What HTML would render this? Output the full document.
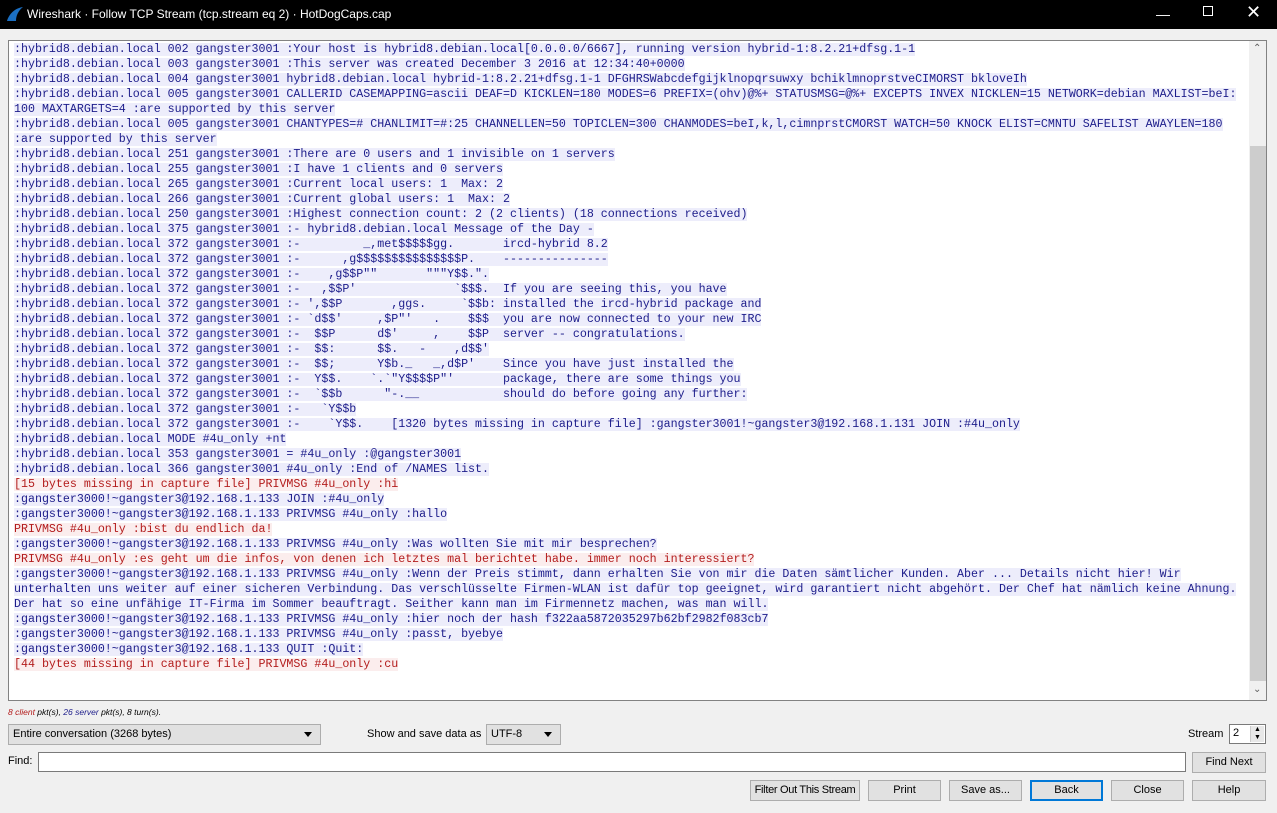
<!DOCTYPE html>
<html><head><meta charset="utf-8"><style>
*{margin:0;padding:0;box-sizing:border-box}
body{width:1277px;height:813px;background:#f0f0f0;position:relative;overflow:hidden;font-family:"Liberation Sans",sans-serif;font-size:11px;color:#000}
#title{position:absolute;left:0;top:0;width:1277px;height:29px;background:#000;color:#fff;font-size:12px}
#title .t{position:absolute;left:27px;top:7px}
#ta{position:absolute;left:8px;top:40px;width:1259px;height:661px;background:#fff;border:1px solid #828282;overflow:hidden}
#txt{position:absolute;left:5px;top:1px;font-family:"Liberation Mono",monospace;font-size:11.65px;line-height:15px}
#txt div{height:15px;white-space:pre}
.s span{background:#ededfb;color:#1c1c8a}
.c span{background:#fbeded;color:#b31c1c}
#sb{position:absolute;right:0;top:0;width:17px;height:659px;background:#f0f0f0}
#thumb{position:absolute;left:1px;top:105px;width:16px;height:535px;background:#cdcdcd}
.abs{position:absolute;white-space:nowrap}
.combo{position:absolute;height:21px;background:#e1e1e1;border:1px solid #adadad;padding:3px 4px;font-size:11px;white-space:nowrap}
.combo:after{content:"";position:absolute;right:8px;top:7px;border:4px solid transparent;border-top:5px solid #000;border-bottom:0}
.btn{position:absolute;top:780px;height:21px;background:#e1e1e1;border:1px solid #adadad;text-align:center;line-height:19px;font-size:11px;white-space:nowrap;overflow:hidden}
</style></head><body>
<div id="title"><svg class="abs" style="left:6px;top:6px" width="18" height="16" viewBox="0 0 18 16"><path d="M1 15 C3 8 9 2 17 1 C12 5 10 10 10 15 Z" fill="#1b6fc2"/></svg><span class="t">Wireshark · Follow TCP Stream (tcp.stream eq 2) · HotDogCaps.cap</span>
<span class="abs" style="left:1156px;top:6px;font-size:14px">&#8212;</span>
<span class="abs" style="left:1203px;top:6px;width:10px;height:10px;border:1px solid #fff"></span>
<span class="abs" style="left:1246px;top:2px;font-size:18px">&#10005;</span>
</div>
<div id="ta"><div id="txt"><div class="s"><span>:hybrid8.debian.local 002 gangster3001 :Your host is hybrid8.debian.local[0.0.0.0/6667], running version hybrid-1:8.2.21+dfsg.1-1</span></div><div class="s"><span>:hybrid8.debian.local 003 gangster3001 :This server was created December 3 2016 at 12:34:40+0000</span></div><div class="s"><span>:hybrid8.debian.local 004 gangster3001 hybrid8.debian.local hybrid-1:8.2.21+dfsg.1-1 DFGHRSWabcdefgijklnopqrsuwxy bchiklmnoprstveCIMORST bkloveIh</span></div><div class="s"><span>:hybrid8.debian.local 005 gangster3001 CALLERID CASEMAPPING=ascii DEAF=D KICKLEN=180 MODES=6 PREFIX=(ohv)@%+ STATUSMSG=@%+ EXCEPTS INVEX NICKLEN=15 NETWORK=debian MAXLIST=beI:</span></div><div class="s"><span>100 MAXTARGETS=4 :are supported by this server</span></div><div class="s"><span>:hybrid8.debian.local 005 gangster3001 CHANTYPES=# CHANLIMIT=#:25 CHANNELLEN=50 TOPICLEN=300 CHANMODES=beI,k,l,cimnprstCMORST WATCH=50 KNOCK ELIST=CMNTU SAFELIST AWAYLEN=180</span></div><div class="s"><span>:are supported by this server</span></div><div class="s"><span>:hybrid8.debian.local 251 gangster3001 :There are 0 users and 1 invisible on 1 servers</span></div><div class="s"><span>:hybrid8.debian.local 255 gangster3001 :I have 1 clients and 0 servers</span></div><div class="s"><span>:hybrid8.debian.local 265 gangster3001 :Current local users: 1  Max: 2</span></div><div class="s"><span>:hybrid8.debian.local 266 gangster3001 :Current global users: 1  Max: 2</span></div><div class="s"><span>:hybrid8.debian.local 250 gangster3001 :Highest connection count: 2 (2 clients) (18 connections received)</span></div><div class="s"><span>:hybrid8.debian.local 375 gangster3001 :- hybrid8.debian.local Message of the Day -</span></div><div class="s"><span>:hybrid8.debian.local 372 gangster3001 :-         _,met$$$$$gg.       ircd-hybrid 8.2</span></div><div class="s"><span>:hybrid8.debian.local 372 gangster3001 :-      ,g$$$$$$$$$$$$$$$P.    ---------------</span></div><div class="s"><span>:hybrid8.debian.local 372 gangster3001 :-    ,g$$P""       """Y$$.".</span></div><div class="s"><span>:hybrid8.debian.local 372 gangster3001 :-   ,$$P'              `$$$.  If you are seeing this, you have</span></div><div class="s"><span>:hybrid8.debian.local 372 gangster3001 :- ',$$P       ,ggs.     `$$b: installed the ircd-hybrid package and</span></div><div class="s"><span>:hybrid8.debian.local 372 gangster3001 :- `d$$'     ,$P"'   .    $$$  you are now connected to your new IRC</span></div><div class="s"><span>:hybrid8.debian.local 372 gangster3001 :-  $$P      d$'     ,    $$P  server -- congratulations.</span></div><div class="s"><span>:hybrid8.debian.local 372 gangster3001 :-  $$:      $$.   -    ,d$$'</span></div><div class="s"><span>:hybrid8.debian.local 372 gangster3001 :-  $$;      Y$b._   _,d$P'    Since you have just installed the</span></div><div class="s"><span>:hybrid8.debian.local 372 gangster3001 :-  Y$$.    `.`"Y$$$$P"'       package, there are some things you</span></div><div class="s"><span>:hybrid8.debian.local 372 gangster3001 :-  `$$b      "-.__            should do before going any further:</span></div><div class="s"><span>:hybrid8.debian.local 372 gangster3001 :-   `Y$$b</span></div><div class="s"><span>:hybrid8.debian.local 372 gangster3001 :-    `Y$$.    [1320 bytes missing in capture file] :gangster3001!~gangster3@192.168.1.131 JOIN :#4u_only</span></div><div class="s"><span>:hybrid8.debian.local MODE #4u_only +nt</span></div><div class="s"><span>:hybrid8.debian.local 353 gangster3001 = #4u_only :@gangster3001</span></div><div class="s"><span>:hybrid8.debian.local 366 gangster3001 #4u_only :End of /NAMES list.</span></div><div class="c"><span>[15 bytes missing in capture file] PRIVMSG #4u_only :hi</span></div><div class="s"><span>:gangster3000!~gangster3@192.168.1.133 JOIN :#4u_only</span></div><div class="s"><span>:gangster3000!~gangster3@192.168.1.133 PRIVMSG #4u_only :hallo</span></div><div class="c"><span>PRIVMSG #4u_only :bist du endlich da!</span></div><div class="s"><span>:gangster3000!~gangster3@192.168.1.133 PRIVMSG #4u_only :Was wollten Sie mit mir besprechen?</span></div><div class="c"><span>PRIVMSG #4u_only :es geht um die infos, von denen ich letztes mal berichtet habe. immer noch interessiert?</span></div><div class="s"><span>:gangster3000!~gangster3@192.168.1.133 PRIVMSG #4u_only :Wenn der Preis stimmt, dann erhalten Sie von mir die Daten sämtlicher Kunden. Aber ... Details nicht hier! Wir</span></div><div class="s"><span>unterhalten uns weiter auf einer sicheren Verbindung. Das verschlüsselte Firmen-WLAN ist dafür top geeignet, wird garantiert nicht abgehört. Der Chef hat nämlich keine Ahnung.</span></div><div class="s"><span>Der hat so eine unfähige IT-Firma im Sommer beauftragt. Seither kann man im Firmennetz machen, was man will.</span></div><div class="s"><span>:gangster3000!~gangster3@192.168.1.133 PRIVMSG #4u_only :hier noch der hash f322aa5872035297b62bf2982f083cb7</span></div><div class="s"><span>:gangster3000!~gangster3@192.168.1.133 PRIVMSG #4u_only :passt, byebye</span></div><div class="s"><span>:gangster3000!~gangster3@192.168.1.133 QUIT :Quit:</span></div><div class="c"><span>[44 bytes missing in capture file] PRIVMSG #4u_only :cu</span></div></div>
<div id="sb"><div id="thumb"></div>
<span class="abs" style="left:4px;top:2px;font-size:10px;color:#606060">&#8963;</span>
<span class="abs" style="left:4px;top:643px;font-size:10px;color:#606060">&#8964;</span></div>
</div>
<div class="abs" style="left:8px;top:707px;font-size:8.5px;font-style:italic"><span style="color:#b31c1c">8 client</span> pkt(s), <span style="color:#1c1c8a">26 server</span> pkt(s), 8 turn(s).</div>
<div class="combo" style="left:8px;top:724px;width:313px">Entire conversation (3268 bytes)</div>
<div class="abs" style="left:367px;top:728px">Show and save data as</div>
<div class="combo" style="left:486px;top:724px;width:75px">UTF-8</div>
<div class="abs" style="left:1188px;top:728px">Stream</div>
<div class="abs" style="left:1229px;top:724px;width:37px;height:20px;background:#fff;border:1px solid #7a7a7a;padding:2px 3px">2<div class="abs" style="right:1px;top:1px;width:14px;height:16px;background:#e8e8e8;border-left:1px solid #ccc;font-size:7px;line-height:8px;text-align:center">&#9650;<br>&#9660;</div></div>
<div class="abs" style="left:8px;top:755px">Find:</div>
<div class="abs" style="left:38px;top:752px;width:1148px;height:20px;background:#fff;border:1px solid #7a7a7a"></div>
<div class="btn" style="left:1192px;top:752px;width:74px">Find Next</div>
<div class="btn" style="left:750px;width:110px;letter-spacing:-0.3px">Filter Out This Stream</div>
<div class="btn" style="left:868px;width:73px">Print</div>
<div class="btn" style="left:949px;width:73px">Save as...</div>
<div class="btn" style="left:1030px;width:73px;border:2px solid #0078d7;line-height:17px">Back</div>
<div class="btn" style="left:1111px;width:73px">Close</div>
<div class="btn" style="left:1192px;width:74px">Help</div>
</body></html>
